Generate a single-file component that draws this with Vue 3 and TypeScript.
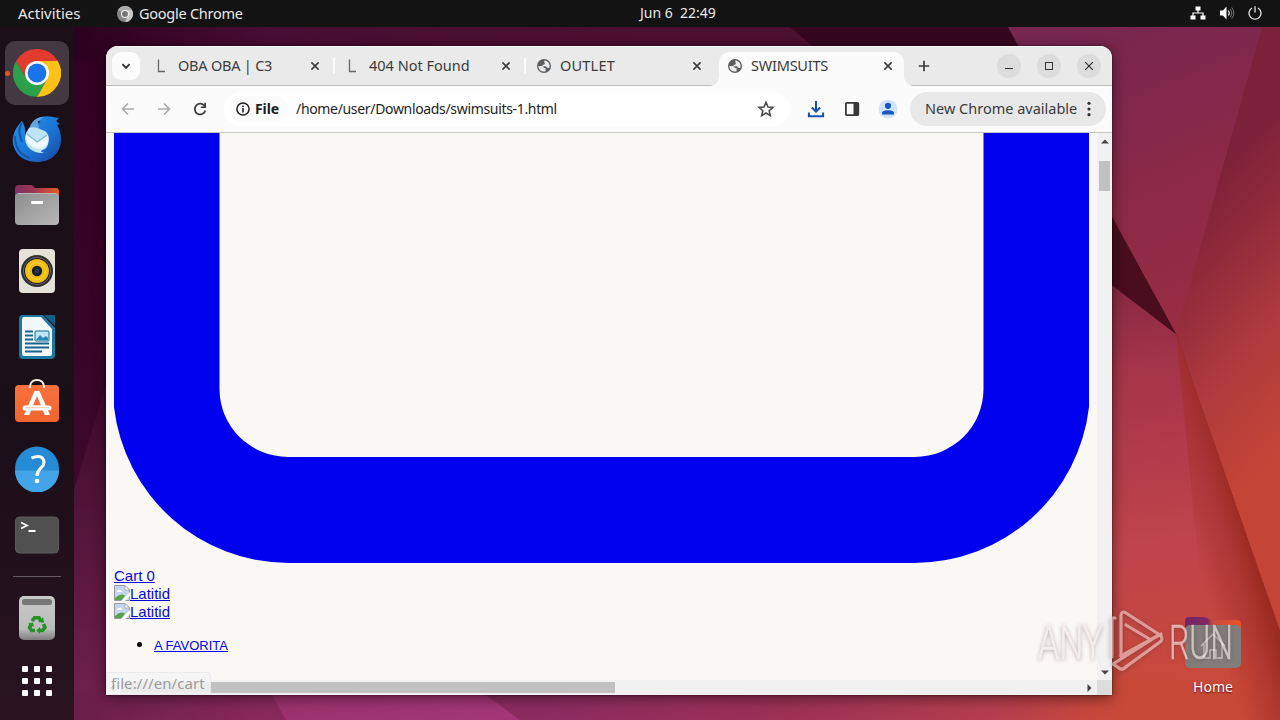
<script setup lang="ts">
interface Tab {
  title: string
  icon: 'letter' | 'globe'
  active: boolean
  spacing: string
}

const tabs: Tab[] = [
  { title: 'OBA OBA | C3', icon: 'letter', active: false, spacing: 'tight' },
  { title: '404 Not Found', icon: 'letter', active: false, spacing: 'normal' },
  { title: 'OUTLET', icon: 'globe', active: false, spacing: 'wide' },
  { title: 'SWIMSUITS', icon: 'globe', active: true, spacing: 'tight' },
]

const logos: string[] = ['Latitid', 'Latitid']
const gridDots: number[] = [0, 1, 2, 3, 4, 5, 6, 7, 8]
</script>

<template>
  <div class="desktop">
    <svg class="wallpaper" viewBox="0 0 1280 720" aria-hidden="true">
      <defs>
        <linearGradient id="wpTop" x1="0" x2="1">
          <stop offset="0" stop-color="#2d001f" /><stop offset=".2" stop-color="#480d34" />
          <stop offset=".6" stop-color="#4c1030" /><stop offset="1" stop-color="#4c1030" />
        </linearGradient>
        <linearGradient id="wpLeft" x1="0" y1="0" x2="0" y2="1">
          <stop offset="0" stop-color="#310022" /><stop offset=".4" stop-color="#390428" />
          <stop offset=".62" stop-color="#4b1135" /><stop offset="1" stop-color="#73224f" />
        </linearGradient>
        <linearGradient id="wpBottom" gradientUnits="userSpaceOnUse" x1="74" y1="0" x2="1254" y2="0">
          <stop offset="0" stop-color="#6a1e4a" /><stop offset=".16" stop-color="#87295b" />
          <stop offset=".4" stop-color="#8b2b60" /><stop offset=".58" stop-color="#9b3056" />
          <stop offset=".78" stop-color="#b33e4e" /><stop offset=".87" stop-color="#c8483c" />
          <stop offset="1" stop-color="#c8483c" />
        </linearGradient>
        <linearGradient id="wpMagenta" x1="0" x2="1">
          <stop offset="0" stop-color="#9a316b" /><stop offset="1" stop-color="#a33778" />
        </linearGradient>
        <linearGradient id="wpPlum" gradientUnits="userSpaceOnUse" x1="1080" y1="30" x2="1200" y2="320">
          <stop offset="0" stop-color="#76264f" /><stop offset=".5" stop-color="#892948" />
          <stop offset="1" stop-color="#992c43" />
        </linearGradient>
        <linearGradient id="wpRed" gradientUnits="userSpaceOnUse" x1="1215" y1="165" x2="1390" y2="330">
          <stop offset="0" stop-color="#7b2139" /><stop offset=".3" stop-color="#922b3b" />
          <stop offset=".65" stop-color="#b03c3d" /><stop offset="1" stop-color="#c44436" />
        </linearGradient>
        <linearGradient id="wpLow" gradientUnits="userSpaceOnUse" x1="1110" y1="280" x2="1160" y2="720">
          <stop offset="0" stop-color="#842842" /><stop offset=".2" stop-color="#a43449" />
          <stop offset=".6" stop-color="#bf444b" /><stop offset="1" stop-color="#cb4a37" />
        </linearGradient>
        <linearGradient id="wpCrease" gradientUnits="userSpaceOnUse" x1="1178" y1="500" x2="1234" y2="484">
          <stop offset="0" stop-color="#a32c22" stop-opacity="0" />
          <stop offset=".6" stop-color="#a22f2a" stop-opacity=".6" />
          <stop offset="1" stop-color="#9b2a1f" />
        </linearGradient>
      </defs>
      <rect width="1280" height="720" fill="#4c1030" />
      <rect x="74" y="27" width="960" height="120" fill="url(#wpTop)" />
      <rect x="74" y="60" width="60" height="660" fill="url(#wpLeft)" />
      <path d="M74 220L112 365L74 490Z" fill="#360526" opacity=".65" />
      <path d="M790 27H1008L1060 120H900Z" fill="#35071f" />
      <rect x="74" y="690" width="1206" height="30" fill="url(#wpBottom)" />
      <path d="M240 640L286 720H520L410 640Z" fill="url(#wpMagenta)" />
      <path d="M1008 27H1280V334H1176Z" fill="url(#wpPlum)" />
      <path d="M1100 276L1176 334L1280 631V690H1100Z" fill="url(#wpLow)" />
      <path d="M1112 680H1280V720H1112Z" fill="#c94938" />
      <path d="M1262 27H1280V631L1176 334Z" fill="url(#wpRed)" />
      <path d="M1176 334L1280 631V720H1214Z" fill="url(#wpCrease)" />
      <path d="M1100 195L1176 334L1100 276Z" fill="#4a0d1e" />
    </svg>

    <header class="topbar">
      <span class="activities">Activities</span>
      <svg class="app-glyph" viewBox="0 0 16 16">
        <circle cx="8" cy="8" r="8" fill="#858585" />
        <path d="M8 8L1 4A8 8 0 0 1 15 4Z" fill="#aaa" />
        <path d="M8 4.2h7.1A8 8 0 0 1 8 16L11.5 9Z" fill="#cacaca" />
        <circle cx="8" cy="8" r="3.5" fill="#777" stroke="#f5f5f5" stroke-width="1.1" />
      </svg>
      <span class="app-name">Google Chrome</span>
      <span class="clock">Jun 6&nbsp; 22:49</span>
      <div class="indicators">
        <svg width="16" height="14" viewBox="0 0 16 14">
          <path d="M5.5 0.5h5v4h-5zM.5 9.5h5v4h-5zM10.5 9.5h5v4h-5z" fill="#fff" />
          <path d="M8 4v3M3 10V7h10v3" fill="none" stroke="#fff" stroke-width="1.2" />
        </svg>
        <svg width="16" height="14" viewBox="0 0 16 14">
          <path d="M1 4.5h3L7.5.5v13L4 9.5H1z" fill="#fff" />
          <path d="M9.3 4.5q2 2.5 0 5" fill="none" stroke="#eee" stroke-width="1.2" />
          <path d="M11 2.8q3.6 4.2 0 8.4M12.7 1.4q4.3 5.6 0 11.2" fill="none" stroke="#777" stroke-width="1" />
        </svg>
        <svg width="14" height="14" viewBox="0 0 14 14">
          <path d="M4 2A6 6 0 1 0 10 2M7 .3v6.2" fill="none" stroke="#e6e6e6" stroke-width="1.3" />
        </svg>
      </div>
    </header>

    <nav class="dock">
      <div class="dock-item running">
        <svg width="48" height="48" viewBox="0 0 48 48">
          <path d="M24 24L3.2 12A24 24 0 0 1 44.8 12Z" fill="#e33b2e" />
          <path d="M3.2 12A24 24 0 0 0 24 48L34.4 30L24 24L13.6 30Z" fill="#2ba14b" />
          <path d="M44.8 12A24 24 0 0 1 24 48L34.4 30L24 12Z" fill="#fbc116" />
          <path d="M3.2 12L13.6 30L24 12Z" fill="#e33b2e" />
          <circle cx="24" cy="24" r="12" fill="#fff" />
          <circle cx="24" cy="24" r="9.4" fill="#1a73e8" />
        </svg>
      </div>
      <div class="dock-item">
        <svg width="50" height="50" viewBox="0 0 50 50">
          <defs>
            <linearGradient id="bird" x1="0" y1="0" x2="1" y2="1">
              <stop offset="0" stop-color="#2393ea" /><stop offset=".55" stop-color="#1c75d5" />
              <stop offset="1" stop-color="#1746a2" />
            </linearGradient>
          </defs>
          <path d="M10 7C3 14-1 23 1.500 32C5 43 14 48 25 48C39 48 49 39 49 25C49 19 47 14 45 11L48 10L44 7L47 4C41 3 36 1 29 3C22 5 19 10 17 15L13 21Q14 13 10 7Z" fill="url(#bird)" />
          <path d="M10 9C5 16 8 22 10 28M3 22C3 34 8 41 18 44" fill="none" stroke="#1258ad" stroke-width="2" />
          <path d="M17 15C20 6 25 3 32 3C26 6 25 11 28 15Z" fill="#63a5e3" />
          <circle cx="27" cy="8" r="1.3" fill="#0c3467" />
          <path d="M17 14C22 12 27 15 33 17C38 20 38 31 33 35C27 37 29 38 32 39C22 40 14 34 13 25C13 20 15 17 17 14Z" fill="#bfe4f8" />
          <path d="M14 20L26 29L36 21C38 28 34 34 28 35C19 34 13 29 14 20Z" fill="#eef9fe" />
          <path d="M15 20L25 28L35 21" fill="none" stroke="#88b9ce" stroke-width="1.3" />
        </svg>
      </div>
      <div class="dock-item">
        <svg width="46" height="42" viewBox="0 0 46 42">
          <defs>
            <linearGradient id="folderTop" x1="0" x2="1"><stop offset="0" stop-color="#813064" /><stop offset=".4" stop-color="#983552" /><stop offset="1" stop-color="#ed5929" /></linearGradient>
            <linearGradient id="folderFront" x1="0" y1="0" x2="1" y2="1"><stop offset="0" stop-color="#8d8d8d" /><stop offset="1" stop-color="#b8b8b8" /></linearGradient>
          </defs>
          <path d="M1 5Q1 1 5 1H17Q19 1 21 4H42Q45 4 45 8V23H1Z" fill="url(#folderTop)" />
          <rect x="1" y="9" width="44" height="32" rx="4" fill="url(#folderFront)" />
          <path d="M4 9.5H42" stroke="#b9b9b9" />
          <rect x="17" y="17" width="12" height="3" rx="1" fill="#fff" />
        </svg>
      </div>
      <div class="dock-item">
        <svg width="38" height="46" viewBox="0 0 38 46">
          <rect x="1" y="1" width="36" height="44" rx="4" fill="#e5e2d9" />
          <circle cx="19" cy="23" r="16" fill="#302f33" />
          <circle cx="19" cy="23" r="13.6" fill="#17191d" stroke="#6c6570" />
          <circle cx="19" cy="23" r="12" fill="#efbd16" />
          <circle cx="19" cy="23" r="8.5" fill="none" stroke="#f8d33b" />
          <circle cx="19" cy="23" r="5.2" fill="#171f2a" />
          <circle cx="19" cy="23" r="2.3" fill="#2d3a4a" />
        </svg>
      </div>
      <div class="dock-item">
        <svg width="38" height="46" viewBox="0 0 38 46">
          <path d="M5 1H25L37 14V41Q37 45 33 45H5Q1 45 1 41V5Q1 1 5 1Z" fill="#1b799f" />
          <path d="M26 1H37V12Z" fill="#126086" />
          <path d="M5 3H23L34 15V40Q34 42 32 42H6Q4 42 4 40V5Z" fill="#f2f7fa" />
          <path d="M7 17.500h8M7 21.500h8M7 25.500h8M7 29.500h24M7 33.500h24M7 37.500h17" stroke="#15668c" stroke-width="1.8" />
          <rect x="17" y="17" width="14" height="10" rx="1" fill="#c2e5f9" stroke="#15668c" />
          <path d="M18 26L22 21L25 24L28 22L30 24V26Z" fill="#2489b7" />
        </svg>
      </div>
      <div class="dock-item bag">
        <svg width="46" height="46" viewBox="0 0 46 46">
          <defs><linearGradient id="bag" x1="0" y1="0" x2="0" y2="1"><stop offset="0" stop-color="#f9713d" /><stop offset="1" stop-color="#ef652e" /></linearGradient></defs>
          <rect x="1" y="6" width="44" height="37" rx="4" fill="url(#bag)" />
          <path d="M16 9V7Q17 1 23 1T30 7V9" fill="none" stroke="#fff3e9" stroke-width="1.8" />
          <path d="M20.5 12h5L36 36h-5.300l-2-5H17.300l-2 5H10zM19 26.500h8L23 17z" fill="#fff" fill-rule="evenodd" />
          <rect x="8.5" y="26.500" width="29" height="5" rx="2.500" fill="#fff" />
          <path d="M11 28.700H35" stroke="#f4b599" stroke-width=".7" />
        </svg>
      </div>
      <div class="dock-item">
        <svg width="46" height="46" viewBox="0 0 46 46">
          <circle cx="23" cy="22.500" r="22" fill="#258bd5" />
          <path d="M1 24.500A22 22 0 0 0 45 24.500Z" fill="#43a5e8" />
          <path d="M17.500 12Q29.500 7.500 30 16.500C30 22 23 22 23 30" fill="none" stroke="#fff" stroke-width="3" />
          <circle cx="23" cy="35" r="2.300" fill="#fff" />
        </svg>
      </div>
      <div class="dock-item">
        <svg width="46" height="38" viewBox="0 0 46 38">
          <rect x="1.500" y="1" width="43" height="36" rx="4" fill="#505050" stroke="#5c5c5c" />
          <path d="M7 6.500L13 9.500L7 12.500M14.500 15H21.500" fill="none" stroke="#fff" stroke-width="1.8" />
        </svg>
      </div>
      <hr class="dock-rule" />
      <div class="dock-item">
        <svg width="38" height="46" viewBox="0 0 38 46">
          <defs><linearGradient id="bin" x1="0" y1="0" x2="0" y2="1"><stop offset="0" stop-color="#c9c9c9" /><stop offset=".75" stop-color="#bcbcbc" /><stop offset="1" stop-color="#7d7a7d" /></linearGradient></defs>
          <rect x="1" y="1" width="36" height="44" rx="5" fill="url(#bin)" />
          <rect x="4" y="4" width="30" height="6" rx="2.500" fill="#777" />
          <g fill="none" stroke="#269126" stroke-width="3.600">
            <path d="M14 26L16.500 22.800H21L23 26" />
            <path d="M25.500 29L27 32.500L24.500 35.500H21" />
            <path d="M17 35.500H13.500L11.500 32.500L13 29.500" />
          </g>
          <path d="M20 27l6 .8-.8-5.500zM22 32v7l-3.700-3.500zM10 28.500l5-1 .9 4.500z" fill="#269126" />
        </svg>
      </div>
      <div class="apps-grid"><i v-for="dot in gridDots" :key="dot"></i></div>
    </nav>

    <div class="home-shortcut">
      <svg width="58" height="52" viewBox="0 0 58 52">
        <defs><linearGradient id="homeTop" x1="0" x2="1"><stop offset="0" stop-color="#742464" /><stop offset=".4" stop-color="#812864" /><stop offset=".5" stop-color="#c74c42" /><stop offset="1" stop-color="#eb5428" /></linearGradient></defs>
        <path d="M1 5Q1 1 5 1H20Q23 1 26 4H53Q57 4 57 8V30H1Z" fill="url(#homeTop)" />
        <rect x="1" y="9" width="56" height="43" rx="5" fill="#827c7b" />
        <path d="M17 30L29 18L41 30M20 28V42H26V34H32V42H38V28" fill="none" stroke="#c4bfbd" stroke-width="1.500" />
      </svg>
      <span>Home</span>
    </div>

    <main class="window">
      <div class="tabstrip">
        <button class="tab-search"><svg width="10" height="7" viewBox="0 0 10 7"><path d="M1.500 1.200L5 4.800L8.500 1.200" fill="none" stroke="#333" stroke-width="1.900" /></svg></button>
        <div v-for="(tab, i) in tabs" :key="i" class="tab" :class="[{ active: tab.active }, tab.spacing]">
          <svg class="favicon" width="16" height="14" viewBox="-1 0 16 14">
            <path v-if="tab.icon === 'letter'" d="M3.500 .5V12.500H10" fill="none" stroke="#666" stroke-width="1.300" />
            <template v-else>
              <circle cx="7" cy="7" r="7" fill="#5b5e61" />
              <path d="M1.400 7.100H4.500Q6.800 7 6.800 9H8.600V12.200Q4.500 13.600 2.200 10.200Q1.400 8.800 1.400 7.100ZM7.500 1.500Q6.400 3.300 8 4.100L7.200 5.700H5.500L5.700 7.200H9Q9.300 9 11.300 9L12.200 8.900Q13.500 4.400 10.200 2.400Q9 1.500 7.500 1.500Z" fill="#ececec" />
            </template>
          </svg>
          <span class="tab-title">{{ tab.title }}</span>
          <svg class="tab-close" width="10" height="10" viewBox="0 0 10 10"><path d="M1.400 1.400L8.600 8.600M8.600 1.400L1.400 8.600" stroke="#3c3c3c" stroke-width="1.600" /></svg>
        </div>
        <svg class="new-tab" width="12" height="12" viewBox="0 0 12 12"><path d="M6 .8V11.200M.8 6H11.200" stroke="#3a3a3a" stroke-width="1.700" /></svg>
        <div class="controls">
          <button><svg width="10" height="10" viewBox="0 0 10 10"><path d="M1 7.500H9" stroke="#333" stroke-width="1.100" /></svg></button>
          <button><svg width="10" height="10" viewBox="0 0 10 10"><rect x="1.500" y="1.500" width="7" height="7" fill="none" stroke="#333" /></svg></button>
          <button><svg width="10" height="10" viewBox="0 0 10 10"><path d="M1.200 1.200L8.800 8.800M8.800 1.200L1.200 8.800" stroke="#333" stroke-width="1.200" /></svg></button>
        </div>
      </div>

      <div class="toolbar">
        <svg class="nav-icon" width="14" height="14" viewBox="0 0 14 14"><path d="M13 7H2M7 1.500L1.500 7L7 12.500" fill="none" stroke="#a9a9a9" stroke-width="1.600" /></svg>
        <svg class="nav-icon" width="14" height="14" viewBox="0 0 14 14"><path d="M1 7H12M7 1.500L12.500 7L7 12.500" fill="none" stroke="#a9a9a9" stroke-width="1.600" /></svg>
        <svg class="nav-icon reload" width="14" height="14" viewBox="0 0 14 14"><path d="M11.800 4.200A5.400 5.400 0 1 0 12.400 8.500" fill="none" stroke="#3c3c3c" stroke-width="1.800" /><path d="M13 .8V6H7.800V4.400H11.300V.8Z" fill="#3c3c3c" /></svg>
        <div class="omnibox">
          <div class="file-chip">
            <svg width="14" height="14" viewBox="0 0 14 14"><circle cx="7" cy="7" r="6.100" fill="none" stroke="#1f1f1f" stroke-width="1.500" /><path d="M7 6V10.400M7 3.400V5" stroke="#1f1f1f" stroke-width="1.600" /></svg>
            <b>File</b>
          </div>
          <span class="url">/home/user/Downloads/swimsuits-1.html</span>
          <svg width="18" height="18" viewBox="0 0 18 18"><path d="M9 2.300L11 7L16 7.400L12.200 10.700L13.300 15.600L9 13L4.700 15.600L5.800 10.700L2 7.400L7 7Z" fill="none" stroke="#4b4b4b" stroke-width="1.600" /></svg>
        </div>
        <svg class="download" width="18" height="18" viewBox="0 0 18 18"><path d="M9 1V11.500M4.800 7.500L9 11.700L13.200 7.500M1.900 12.500V16.200H16.100V12.500" fill="none" stroke="#1552ad" stroke-width="2" /></svg>
        <svg class="panel" width="16" height="16" viewBox="0 0 16 16"><rect x="1.900" y="1.800" width="12.400" height="12.400" rx="1" fill="none" stroke="#393939" stroke-width="1.800" /><path d="M9.500 2H14V14.500H9.500Z" fill="#393939" /></svg>
        <svg class="profile" width="20" height="20" viewBox="0 0 20 20"><circle cx="10" cy="10" r="9.500" fill="#d3e3fd" /><circle cx="10" cy="6.800" r="3.100" fill="#1557bd" /><path d="M4 15.500V14Q4 11.200 10 11.200T16 14V15.500Z" fill="#1557bd" /></svg>
        <button class="update"><span>New Chrome available</span><svg width="4" height="16" viewBox="0 0 4 16"><circle cx="2" cy="2.300" r="1.600" /><circle cx="2" cy="8" r="1.600" /><circle cx="2" cy="13.700" r="1.600" /></svg></button>
      </div>

      <div class="viewport">
        <div class="page">
          <svg class="shape" viewBox="106 133 991 430"><path d="M114 133H219.500V389A69 68 0 0 0 288 457H915A69 68 0 0 0 983.500 389V133H1089V407A176 176 0 0 1 914 563H289A176 176 0 0 1 114 407Z" fill="#0000ee" /></svg>
          <a class="cart">Cart 0</a>
          <a v-for="(logo, i) in logos" :key="i" class="logo">
            <svg width="16" height="16" viewBox="0 0 16 16">
              <path d="M.5 15.500V.5H11L15.500 5V15.500Z" fill="#c3d5f1" stroke="#9a9a9a" />
              <path d="M11 .5V5H15.500Z" fill="#fff" stroke="#999" stroke-width=".7" />
              <path d="M3 6.500Q3 4.500 5 5Q7.500 4 8 7H3Z" fill="#fff" />
              <path d="M1 15V13Q6 7.500 11 10.500L8 15Z" fill="#55a34a" />
              <path d="M7 16L16 7V11L11 16Z" fill="#fff" />
            </svg><span>{{ logo }}</span>
          </a>
          <ul><li><a>A FAVORITA</a></li></ul>
        </div>
        <div class="vscroll">
          <svg width="8" height="5" viewBox="0 0 8 5"><path d="M0 4.500L4 .5L8 4.500Z" fill="#454545" /></svg>
          <i class="vthumb"></i>
          <svg class="down" width="8" height="5" viewBox="0 0 8 5"><path d="M0 .5L4 4.500L8 .5Z" fill="#454545" /></svg>
        </div>
      </div>
      <div class="hscroll">
        <svg width="5" height="8" viewBox="0 0 5 8"><path d="M4.500 0L.5 4L4.500 8Z" fill="#454545" /></svg>
        <i class="hthumb"></i>
        <svg class="right" width="5" height="8" viewBox="0 0 5 8"><path d="M.5 0L4.500 4L.5 8Z" fill="#454545" /></svg>
        <i class="corner"></i>
      </div>
      <div class="status">file:///en/cart</div>
    </main>

    <svg class="watermark" width="250" height="80" viewBox="1030 600 250 80">
      <text x="1038" y="659" textLength="65" lengthAdjust="spacingAndGlyphs">ANY</text>
      <text x="1169" y="659" textLength="64" lengthAdjust="spacingAndGlyphs">RUN</text>
      <g fill="none" stroke-linejoin="round" stroke-linecap="round">
        <path d="M1112 657V621Q1112 617 1115 618" />
        <path d="M1121 656V616Q1121 610 1126 613L1160 635Q1164 639 1160 642L1127 666Q1122 671 1119 668L1113 664L1151 640L1126 625" />
        <path d="M1121 656L1161 634" />
      </g>
    </svg>
  </div>
</template>

<style>
body { overflow: hidden; }
</style>

<style scoped>
* { box-sizing: border-box; }
.desktop { position: relative; width: 1280px; height: 720px; overflow: hidden; font-family: "Noto Sans", sans-serif; }
svg { display: block; flex: none; }
button { border: 0; padding: 0; font: inherit; }
.wallpaper { position: absolute; inset: 0; width: 1280px; height: 720px; }

.topbar { position: absolute; inset: 0 0 auto 0; height: 27px; background: #131313; color: #e9e9e9; display: flex; align-items: center; padding-left: 18px; font-size: 14.5px; line-height: 27px; }
.activities { font-size: 15px; width: 99px; }
.app-glyph { width: 16px; height: 16px; margin-right: 6px; }
.app-name { letter-spacing: -.25px; }
.clock { position: absolute; left: 640px; top: -1px; font-size: 14px; white-space: pre; }
.indicators { margin-left: auto; margin-right: 18px; display: flex; gap: 13px; padding-bottom: 1px; }

.dock { position: absolute; left: 0; top: 27px; width: 74px; height: 693px; background: linear-gradient(#1b1018, #1a0e17 55%, #291321); display: flex; flex-direction: column; align-items: center; padding-top: 13px; }
.dock-item { width: 64px; height: 66px; flex: none; display: flex; align-items: center; justify-content: center; position: relative; }
.running::before { content: ""; position: absolute; inset: 1px 0; border-radius: 10px; background: #443942; }
.running::after { content: ""; position: absolute; left: 0; top: 30.5px; width: 5px; height: 5px; border-radius: 50%; background: #e95420; }
.running svg { position: relative; }
.bag { padding-bottom: 2px; }
.dock-rule { width: 48px; height: 1px; border: 0; background: #675b63; margin: 8px 0; flex: none; }
.apps-grid { display: grid; grid-template-columns: repeat(3, 6px); gap: 6px; margin-top: 15px; }
.apps-grid i { width: 6px; height: 6px; border-radius: 1px; background: #fff; }

.home-shortcut { position: absolute; left: 1173px; top: 616px; width: 80px; display: flex; flex-direction: column; align-items: center; color: #fff; font-size: 14px; line-height: 20px; text-shadow: 0 1px 2px #500; }
.home-shortcut span { margin-top: 9px; }

.window { position: absolute; left: 106px; top: 46px; width: 1006px; height: 649px; border-radius: 12px 12px 0 0; overflow: hidden; background: #fbfbfb; color: #3b3b3b; }
.desktop::before { content: ""; position: absolute; z-index: 0; left: 106px; top: 46px; width: 1006px; height: 649px; border-radius: 12px 12px 0 0; box-shadow: 0 3px 14px rgba(0, 0, 0, .5), 0 0 2px rgba(0, 0, 0, .7); }
.desktop::before, .window, .dock, .topbar, .home-shortcut, .watermark { z-index: 1; }

.tabstrip { height: 40px; background: #eaeaea; border-top: 1px solid #fafafa; border-bottom: 1px solid #bdbdbd; display: flex; padding-left: 6px; }
.tab-search { width: 28px; height: 28px; border-radius: 9px; background: #fbfbfb; margin: 5px 4px 0 0; display: flex; align-items: center; justify-content: center; flex: none; }
.tab { width: 191px; height: 38px; flex: none; display: flex; align-items: center; padding: 0 15px 0 10px; font-size: 14.5px; position: relative; }
.tab-title { margin: 0 0 3px 8px; flex: 1; white-space: nowrap; }
.tight { letter-spacing: -.22px; }
.wide { letter-spacing: .2px; }
.tab:nth-of-type(-n + 2)::after { content: ""; position: absolute; right: 0; top: 11px; width: 2px; height: 16px; background: #fafafa; }
.active::before { content: ""; position: absolute; left: 2px; width: 185px; top: 5px; height: 35px; background: #fbfbfb; border-radius: 10px 10px 0 0; }
.active::after { content: ""; position: absolute; left: -7px; width: 203px; bottom: -1px; height: 9px; background: radial-gradient(circle at 0 0, transparent 8.5px, #fbfbfb 9px) left / 9px 9px no-repeat, radial-gradient(circle at 100% 0, transparent 8.5px, #fbfbfb 9px) right / 9px 9px no-repeat; }
.tab > * { position: relative; z-index: 1; }
.tab-close, .favicon { margin-bottom: 1px; }
.active + .new-tab { margin: 13px 0 0 10px; }
.controls { margin: 7px 11px 0 auto; display: flex; gap: 16px; }
.controls button { width: 24px; height: 24px; border-radius: 50%; background: #dcdcdc; display: flex; align-items: center; justify-content: center; }

.toolbar { height: 47px; border-bottom: 1px solid #c5c5c5; display: flex; align-items: center; padding-left: 15px; }
.nav-icon { margin-right: 22px; }
.reload { margin-right: 17px; }
.omnibox { width: 566px; height: 34px; border-radius: 17px; background: #fff; display: flex; align-items: center; padding: 0 15px 0 6px; color: #1e1e1e; }
.file-chip { display: flex; align-items: center; height: 26px; width: 58px; padding-left: 6px; border-radius: 13px; background: #fbfbfb; }
.file-chip b { margin: 0 0 2px 5px; font-size: 14px; letter-spacing: -.1px; }
.url { margin: 0 0 2px 8px; flex: 1; font-size: 14px; letter-spacing: -.33px; white-space: nowrap; }
.download { margin-left: 17px; }
.panel { margin-left: 19px; }
.profile { margin-left: 18px; }
.update { margin-left: 12px; width: 196px; height: 34px; border-radius: 17px; background: #e8e8e8; color: #3b3b3b; display: flex; align-items: center; padding-left: 15px; font-size: 14.5px; white-space: nowrap; }
.update span { width: 162px; text-align: left; padding-bottom: 2px; }
.update svg { fill: #333; }

.viewport { height: 547px; display: flex; background: #faf8f5; }
.page { width: 991px; overflow: hidden; font: 15px/18px "Liberation Sans", Arial, sans-serif; color: #000; }
.page a { color: #0000ee; text-decoration: underline; }
.shape { width: 991px; height: 430px; }
.cart { display: block; margin: 4px 0 0 8px; height: 18px; }
.page a.cart, .page a.logo { color: #0808d8; }
.logo { display: flex; align-items: flex-start; height: 18px; margin-left: 8px; }
.page ul { margin: 16px 0 0 8px; padding-left: 40px; font-size: 13px; line-height: 16px; }
.page li::marker { font-size: 17px; }
.vscroll { width: 15px; background: #f1f1f1; display: flex; flex-direction: column; align-items: center; padding: 6px 0 5px; }
.vthumb { width: 11px; height: 30px; background: #c1c1c1; margin-top: 17px; }
.down { margin-top: auto; }
.hscroll { height: 15px; background: #f1f1f1; display: flex; align-items: center; padding-left: 4px; }
.hthumb { height: 11px; width: 494px; margin-left: 6px; background: #c1c1c1; }
.right { margin-left: auto; margin-right: 5px; }
.corner { width: 15px; height: 15px; background: #dcdcdc; }
.status { position: absolute; left: 0; bottom: 0; width: 105px; height: 23px; padding-left: 4px; line-height: 20px; font-size: 15px; letter-spacing: .07px; color: rgba(95, 95, 95, .6); background: rgba(244, 244, 244, .84); border-radius: 0 4px 0 0; border: 1px solid rgba(225, 225, 225, .5); white-space: nowrap; }

.watermark { position: absolute; left: 1030px; top: 600px; filter: drop-shadow(0 1px 2px rgba(70, 50, 50, .6)); opacity: .65; }
.watermark text { font-family: Roboto, sans-serif; font-size: 48px; font-weight: 300; fill: #f2eae8; stroke: #f2eae8; stroke-width: .4; }
.watermark path { stroke: #eec9c5; stroke-width: 3.2; }
</style>
